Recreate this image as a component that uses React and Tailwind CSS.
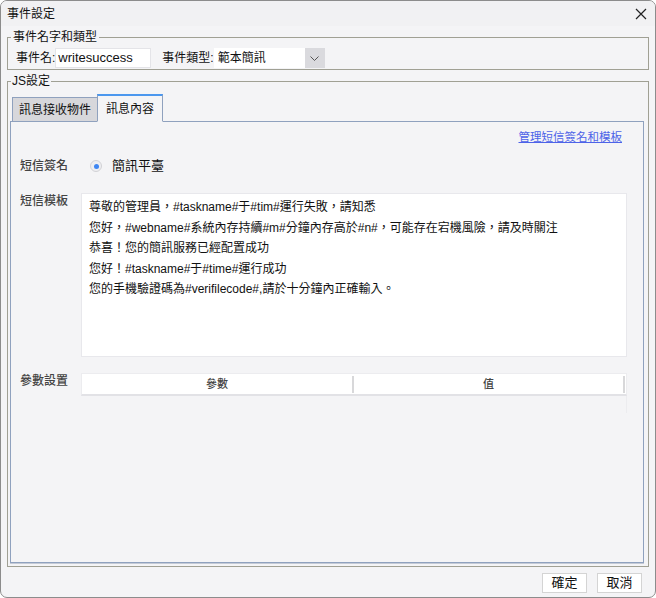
import React from "react";

const lines = [
  "尊敬的管理員，#taskname#于#tim#運行失敗，請知悉",
  "您好，#webname#系統內存持續#m#分鐘內存高於#n#，可能存在宕機風險，請及時關注",
  "恭喜！您的簡訊服務已經配置成功",
  "您好！#taskname#于#time#運行成功",
  "您的手機驗證碼為#verifilecode#,請於十分鐘內正確輸入。",
];

const EventDialog = () => {
  return (
    <div
      className="w-[656px] h-[598px] text-[12px] text-[#111]"
      style={{ fontFamily: '"Liberation Sans", "Noto Sans CJK TC", sans-serif' }}
    >
      <div className="h-full flex flex-col border border-[#8c8c8c] rounded-[7px] bg-[#f4f4f6] overflow-hidden">
        {/* title bar */}
        <div className="h-[25px] flex items-center justify-between pl-[6px] pr-[8px] bg-[#f1f1f3]">
          <span className="leading-[16px]">事件設定</span>
          <svg width="12" height="12" viewBox="0 0 12 12">
            <path d="M1 1L11 11M11 1L1 11" stroke="#222" strokeWidth="1.2" />
          </svg>
        </div>

        <div className="flex-1 flex flex-col px-[6px]">
          {/* event name & type */}
          <fieldset className="mt-[3px] border border-[#a0a094] pl-[3px]">
            <legend className="px-[2px] leading-[16px]">事件名字和類型</legend>
            <div className="mt-[3px] mb-[1px] pl-[5px] flex items-center h-[20px]">
              <span>事件名:</span>
              <div className="w-[96px] h-[20px] bg-white border border-[#e4e4e8] flex items-center pl-[2px] text-[13px]">
                writesuccess
              </div>
              <span className="ml-[11px]">事件類型:</span>
              <div className="w-[111px] h-[20px] bg-white flex items-center">
                <span className="flex-1 pl-[4px]">範本簡訊</span>
                <div className="w-[20px] h-full bg-[#dadade] flex items-center justify-center">
                  <svg width="9" height="5" viewBox="0 0 9 5">
                    <path d="M0.5 0.5L4.5 4.5L8.5 0.5" stroke="#555" strokeWidth="1" fill="none" />
                  </svg>
                </div>
              </div>
            </div>
          </fieldset>

          {/* JS settings */}
          <fieldset className="mt-[3px] flex-1 flex flex-col border border-[#a0a094] pl-[2px] pr-[4px] pb-[3px]">
            <legend className="ml-[1px] px-[1px] leading-[16px]">JS設定</legend>

            <div className="mt-[5px] h-[28px] -mb-px flex items-end pl-[2px] relative z-10">
              <div className="w-[85px] h-[25px] flex items-center justify-center bg-[#d7d7db] border border-r-0 border-[#8fa1be]">
                訊息接收物件
              </div>
              <div className="w-[66px] h-[28px] flex items-center justify-center bg-[#f4f4f6] border border-[#8fa1be] border-t-2 border-t-[#4b97ee] border-b-[#f4f4f6]">
                訊息內容
              </div>
            </div>

            <div className="flex-1 border border-[#8fa1be] shadow-[0_1px_0_#c4cad6] pl-[9px]">
              <div className="pt-[7px] pr-[21px] flex justify-end">
                <a className="text-[11.5px] leading-[16px] text-[#4d63e8] underline">管理短信簽名和模板</a>
              </div>

              <div className="mt-[11px] h-[20px] flex items-center">
                <span className="w-[70px] text-[#444] font-medium">短信簽名</span>
                <div className="w-[12px] h-[12px] rounded-full border border-[#d2d2d6] bg-[#eeeef1] flex items-center justify-center">
                  <div className="w-[5px] h-[5px] rounded-full bg-[#3f86f2]" />
                </div>
                <span className="ml-[10px] text-[13px]">簡訊平臺</span>
              </div>

              <div className="mt-[17px] flex">
                <span className="w-[61px] pt-[1px] leading-[14px] text-[#444] font-medium">短信模板</span>
                <div className="w-[546px] h-[164px] bg-white border border-[#e8e8ec] pl-[7px] pt-[3px]">
                  {lines.map((l) => (
                    <div key={l} className="leading-[20.5px] whitespace-nowrap">
                      {l}
                    </div>
                  ))}
                </div>
              </div>

              <div className="mt-[16px] flex">
                <span className="w-[61px] pt-[1px] leading-[14px] text-[#444] font-medium">參數設置</span>
                <div className="w-[546px]">
                  <div className="h-[23px] flex items-center pt-[1px] bg-white border border-[#ececef] border-b-2 border-b-[#e2e2e6] text-[11px] text-[#444] font-medium">
                    <div className="w-[270px] text-center">參數</div>
                    <div className="w-[2px] h-[17px] bg-[#d8d8da]" />
                    <div className="flex-1 text-center">值</div>
                    <div className="w-[2px] h-[17px] bg-[#d8d8da]" />
                    <div className="w-[1px]" />
                  </div>
                  <div className="h-[17px] border-r border-[#ececef]" />
                </div>
              </div>
            </div>
          </fieldset>

          <div className="h-[30px] flex justify-end items-start pt-[6px] pr-[7px] gap-[10px]">
            <button className="w-[45px] h-[20px] bg-white border border-[#d4d4d4] text-[13px] leading-[16px]">確定</button>
            <button className="w-[45px] h-[20px] bg-white border border-[#d4d4d4] text-[13px] leading-[16px]">取消</button>
          </div>
        </div>
      </div>
    </div>
  );
};

export default EventDialog;
